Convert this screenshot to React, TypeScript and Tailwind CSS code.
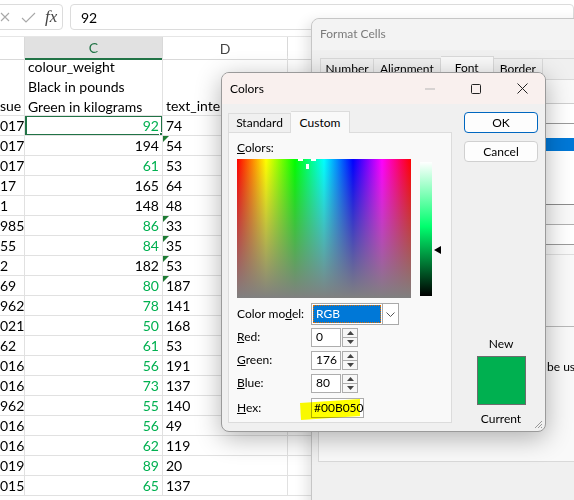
import React from "react";

const rows = [
  { b: "017", c: "92", g: true, d: "74", tri: false },
  { b: "017", c: "194", g: false, d: "54", tri: true },
  { b: "017", c: "61", g: true, d: "53", tri: false },
  { b: "17", c: "165", g: false, d: "64", tri: false },
  { b: "1", c: "148", g: false, d: "48", tri: false },
  { b: "985", c: "86", g: true, d: "33", tri: true },
  { b: "55", c: "84", g: true, d: "35", tri: true },
  { b: "2", c: "182", g: false, d: "53", tri: true },
  { b: "69", c: "80", g: true, d: "187", tri: true },
  { b: "962", c: "78", g: true, d: "141", tri: false },
  { b: "021", c: "50", g: true, d: "168", tri: false },
  { b: "62", c: "61", g: true, d: "53", tri: false },
  { b: "016", c: "56", g: true, d: "191", tri: false },
  { b: "016", c: "73", g: true, d: "137", tri: false },
  { b: "962", c: "55", g: true, d: "140", tri: false },
  { b: "016", c: "56", g: true, d: "49", tri: false },
  { b: "016", c: "62", g: true, d: "119", tri: false },
  { b: "019", c: "89", g: true, d: "20", tri: false },
  { b: "015", c: "65", g: true, d: "137", tri: false },
];

const cell = "border-b border-r border-[#e1e1e1] whitespace-nowrap overflow-hidden";

function FormulaBar() {
  return (
    <div className="flex h-[33px] items-start gap-[7px] pt-[4px]">
      <div className="-ml-[6px] flex h-[26px] w-[69px] items-center rounded-[4px] border border-[#dcdcdc] pl-[5px]">
        <svg width="10" height="10" viewBox="0 0 10 10" className="stroke-[#a8a8a8]">
          <path d="M1 1L9 9M9 1L1 9" strokeWidth="1.1" />
        </svg>
        <svg width="15" height="11" viewBox="0 0 15 11" className="ml-[11px] stroke-[#a8a8a8]" fill="none">
          <path d="M1 6L5 10L14 1" strokeWidth="1.1" />
        </svg>
        <span className="ml-[9px] font-['Liberation_Serif',serif] text-[17px] italic text-[#444]">fx</span>
      </div>
      <div className="flex h-[26px] flex-1 items-center rounded-[4px] border border-[#dcdcdc] pl-[10px] text-[14px]">92</div>
    </div>
  );
}

function Sheet() {
  return (
    <div className="flex flex-col">
      <FormulaBar />
      <div className="mt-[3px] grid h-[20px] grid-cols-[25px_138px_125px_1fr] border-t border-[#e6e6e6] text-[14px]">
        <div className="border-b border-r border-[#d9d9d9]" />
        <div className="flex items-center justify-center border-b-2 border-r border-b-[#217346] border-r-[#d9d9d9] bg-[#e1e1e1] text-[#217346]">C</div>
        <div className="flex items-center justify-center border-b border-r border-[#d9d9d9] text-[#444]">D</div>
        <div className="border-b border-[#d9d9d9]" />
      </div>
      <div className="grid grid-cols-[25px_138px_125px_1fr] text-[14px] leading-[20px]">
        <div className={`${cell} flex h-[60px] flex-col justify-end`}>
          <span className="-mb-px">sue</span>
        </div>
        <div className={`${cell} flex h-[60px] flex-col pl-[3px] pt-px`}>
          <span>colour_weight</span>
          <span>Black in pounds</span>
          <span>Green in kilograms</span>
        </div>
        <div className={`${cell} flex h-[60px] flex-col justify-end pl-[3px]`}>
          <span className="-mb-px">text_interest</span>
        </div>
        <div className="h-[60px] border-b border-[#e1e1e1]" />
        {rows.map((r, i) => (
          <React.Fragment key={i}>
            <div className={`${cell} h-[20px]`}>{r.b}</div>
            <div className={`${cell} relative h-[20px] pr-[3px] text-right ${r.g ? "text-[#00b050]" : "text-black"}`}>
              {r.c}
              {i === 0 && (
                <>
                  <span className="absolute -top-px left-0 -right-px -bottom-px border-2 border-[#217346]" />
                  <span className="absolute -bottom-[3px] -right-[3px] h-[6px] w-[6px] border border-white bg-[#217346]" />
                </>
              )}
            </div>
            <div className={`${cell} relative h-[20px] pl-[3px]`}>
              {r.d}
              {r.tri && (
                <span className="absolute left-0 top-0 h-0 w-0 border-r-[6px] border-t-[6px] border-r-transparent border-t-[#1e7b34]" />
              )}
            </div>
            <div className="h-[20px] border-b border-[#e1e1e1]" />
          </React.Fragment>
        ))}
      </div>
    </div>
  );
}

function FormatCells() {
  return (
    <div className="absolute left-[311px] top-[18px] flex h-[500px] w-[290px] flex-col rounded-tl-[8px] border border-[#c6c6c6] bg-[#f0f0f0] text-[12px] shadow-[-4px_4px_14px_rgba(0,0,0,0.12)]">
      <div className="h-[31px] rounded-tl-[8px] bg-[#f3f3f3] pl-[8px] pt-[6px] text-[#7a7a7a]">Format Cells</div>
      <div className="flex h-[29px] items-end pl-[8px]">
        <div className="flex h-[21px] w-[57px] items-center justify-center border border-b-0 border-[#d9d9d9]">Number</div>
        <div className="flex h-[21px] w-[70px] items-center justify-center border border-b-0 border-l-0 border-[#d9d9d9]">Alignment</div>
        <div className="flex h-[23px] w-[56px] items-start justify-center border border-b-0 border-l-0 border-[#d9d9d9] bg-[#f9f9f9] pt-[2px]">Font</div>
        <div className="flex h-[21px] w-[52px] items-center justify-center border border-b-0 border-l-0 border-[#d9d9d9]">Border</div>
        <div className="h-[21px] w-[60px] border border-b-0 border-l-0 border-[#d9d9d9]" />
      </div>
      <div className="ml-[6px] flex h-[383px] flex-col border border-[#d9d9d9] bg-[#f9f9f9] pl-[221px]">
        <div className="mt-[23px] h-[21px] border-y border-b-[#9a9a9a] border-t-[#cfcfcf] bg-white" />
        <div className="h-[81px] border-b border-[#8c8c8c] bg-white pt-[14px]">
          <div className="h-[13px] bg-[#0078d7]" />
        </div>
        <div className="mt-[19px] h-[21px] border-y border-b-[#9a9a9a] border-t-[#b0b0b0] bg-white" />
        <div className="mt-[9px] border-t border-[#dedede]" />
        <div className="mt-[71px] border-t border-[#b8b8b8]" />
        <div className="-ml-[14px] mt-[31px] whitespace-nowrap">will be used on both your printer and your screen.</div>
      </div>
    </div>
  );
}

function Spin() {
  return (
    <div className="ml-px flex h-[19px] w-[16px] flex-col border border-[#adadad] bg-[#f7f7f7]">
      <div className="flex flex-1 items-center justify-center border-b border-[#adadad]">
        <svg width="7" height="4" viewBox="0 0 7 4"><path d="M0 4L3.5 0L7 4Z" fill="#444" /></svg>
      </div>
      <div className="flex flex-1 items-center justify-center">
        <svg width="7" height="4" viewBox="0 0 7 4"><path d="M0 0L3.5 4L7 0Z" fill="#444" /></svg>
      </div>
    </div>
  );
}

function NumRow({ label, u, value }: { label: string; u: string; value: string }) {
  return (
    <div className="mt-px flex h-[22px] items-center">
      <span className="w-[74px]"><u>{u}</u>{label}</span>
      <div className="flex h-[19px] w-[30px] items-center border border-[#adadad] bg-white pl-[4px]">{value}</div>
      <Spin />
    </div>
  );
}

function ColorsDialog() {
  return (
    <div className="absolute left-[221px] top-[72px] flex h-[360px] w-[325px] flex-col overflow-hidden rounded-[8px] border border-[#9a9a9a] bg-[#f0f0f0] text-[12px] shadow-[0_6px_26px_rgba(0,0,0,0.3)]">
      <div className="flex h-[31px] items-center bg-[#f9f0ee]">
        <span className="pl-[8px]">Colors</span>
        <div className="ml-auto flex h-full">
          <div className="flex w-[46px] items-center justify-center">
            <svg width="10" height="2" viewBox="0 0 10 2"><path d="M0 1H10" stroke="#b5b5b5" /></svg>
          </div>
          <div className="flex w-[46px] items-center justify-center">
            <svg width="10" height="10" viewBox="0 0 10 10" fill="none"><rect x="0.5" y="0.5" width="9" height="9" rx="1" stroke="#222" /></svg>
          </div>
          <div className="flex w-[46px] items-center justify-center">
            <svg width="11" height="11" viewBox="0 0 11 11"><path d="M0.5 0.5L10.5 10.5M10.5 0.5L0.5 10.5" stroke="#222" /></svg>
          </div>
        </div>
      </div>
      <div className="flex pl-[6px] pt-[7px]">
        <div className="flex w-[224px] flex-col">
          <div className="flex h-[21px] items-end">
            <div className="flex h-[19px] w-[63px] items-center justify-center border border-b-0 border-[#dcdcdc]">Standard</div>
            <div className="relative z-10 -mb-px flex h-[22px] w-[59px] items-center justify-center border border-b-0 border-l-0 border-[#dcdcdc] bg-[#f9f9f9]">Custom</div>
          </div>
          <div className="flex h-[291px] flex-col border border-[#dcdcdc] bg-[#f9f9f9] pl-[8px] pt-[8px]">
            <span className="leading-[14px]"><u>C</u>olors:</span>
            <div className="mt-[4px] flex items-start">
              <div className="relative h-[139px] w-[174px] bg-[linear-gradient(to_right,#ff0000,#ffff00,#00ff00,#00ffff,#0000ff,#ff00ff,#ff0000)]">
                <div className="absolute inset-0 bg-[linear-gradient(to_bottom,rgba(128,128,128,0),#808080)]" />
                <span className="absolute left-[61px] top-0 h-[2px] w-[5px] bg-white" />
                <span className="absolute left-[74px] top-0 h-[2px] w-[5px] bg-white" />
                <span className="absolute left-[69px] top-[5px] h-[5px] w-[3px] bg-white" />
              </div>
              <div className="ml-[9px] mt-[3px] h-[134px] w-[12px] bg-[linear-gradient(to_bottom,#ffffff,#00ff6e_48%,#000000)]" />
              <svg width="7" height="8" viewBox="0 0 7 8" className="ml-[2px] mt-[87px]"><path d="M0 4L7 0V8Z" fill="#000" /></svg>
            </div>
            <div className="mt-[5px] flex h-[22px] items-center">
              <span className="w-[74px]">Color mo<u>d</u>el:</span>
              <div className="flex h-[22px] w-[88px] border border-[#a9a9a9] bg-white">
                <div className="m-px flex flex-1 items-center border border-dotted border-[#e06d00] bg-[#0078d7] pl-[2px] text-white">RGB</div>
                <div className="flex w-[16px] items-center justify-center border-l border-[#a9a9a9]">
                  <svg width="9" height="5" viewBox="0 0 9 5" fill="none"><path d="M0.5 0.5L4.5 4.5L8.5 0.5" stroke="#555" /></svg>
                </div>
              </div>
            </div>
            <NumRow label="ed:" u="R" value="0" />
            <NumRow label="reen:" u="G" value="176" />
            <NumRow label="lue:" u="B" value="80" />
            <div className="mt-[3px] flex h-[22px] items-center">
              <span className="w-[74px]"><u>H</u>ex:</span>
              <div className="relative flex h-[20px] w-[53px] items-center border border-[#adadad] bg-white pl-[2px]">
                #00B050
                <svg width="62" height="21" viewBox="0 0 62 21" className="absolute -left-[12px] top-0 mix-blend-multiply">
                  <path d="M0 4L60 0L60 17L1 21Z" fill="#ffff00" />
                </svg>
              </div>
            </div>
          </div>
        </div>
        <div className="ml-[12px] flex w-[74px] flex-col items-center">
          <div className="mt-[1px] flex h-[21px] w-[74px] items-center justify-center rounded-[4px] border border-[#0067c0] bg-[#fdfdfd]">OK</div>
          <div className="mt-[8px] flex h-[21px] w-[74px] items-center justify-center rounded-[4px] border border-[#d0d0d0] bg-[#fdfdfd]">Cancel</div>
          <span className="mt-[174px] leading-[16px]">New</span>
          <div className="mt-[4px] h-[49px] w-[49px] border border-[#6d6d6d] bg-[#00b050]" />
          <span className="mt-[6px] leading-[16px]">Current</span>
        </div>
      </div>
      <svg width="9" height="9" viewBox="0 0 9 9" className="absolute bottom-[2px] right-[2px]">
        <path d="M8 1L1 8M8 4L4 8M8 7L7 8" stroke="#999" />
      </svg>
    </div>
  );
}

export default function App() {
  return (
    <div className="relative h-[500px] w-[574px] overflow-hidden bg-white font-['Lato',sans-serif] text-black">
      <Sheet />
      <FormatCells />
      <ColorsDialog />
    </div>
  );
}
